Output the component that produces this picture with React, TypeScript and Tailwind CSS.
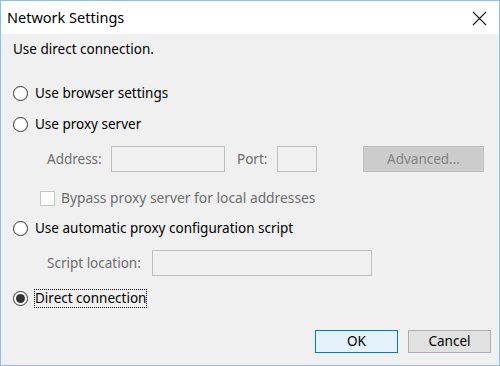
import React from "react";

const font = { fontFamily: '"Noto Sans", "Open Sans", sans-serif' };

function Radio({ checked }: { checked?: boolean }) {
  return (
    <span className="flex h-[15px] w-[15px] shrink-0 items-center justify-center rounded-full border border-[#333333] bg-white">
      {checked && <span className="h-[9px] w-[9px] rounded-full bg-[#333333]" />}
    </span>
  );
}

function RadioRow({
  label,
  checked,
  focused,
  className,
}: {
  label: string;
  checked?: boolean;
  focused?: boolean;
  className?: string;
}) {
  return (
    <div className={`flex h-[20px] items-center pl-[12px] ${className ?? ""}`}>
      <Radio checked={checked} />
      <span
        className={`ml-[6px] leading-[17px] text-black ${
          focused ? "border border-dotted border-black" : "px-[1px]"
        }`}
      >
        {label}
      </span>
    </div>
  );
}

function DisabledInput({ className }: { className: string }) {
  return <div className={`h-[26px] shrink-0 border border-[#bfbfbf] bg-[#f0f0f0] ${className}`} />;
}

export default function App() {
  return (
    <div
      className="flex h-[366px] w-[500px] flex-col border border-[#8fbfec] bg-[#f0f0f0] text-[13.5px] text-black"
      style={font}
    >
      <div className="flex h-[33px] shrink-0 items-center justify-between bg-white pl-[6px] pr-[12px]">
        <span className="text-[14.5px] text-black">Network Settings</span>
        <svg width="15" height="15" viewBox="0 0 15 15" className="mt-[1px]">
          <path d="M1 1 L14 14 M14 1 L1 14" stroke="#1a1a1a" strokeWidth="1.1" fill="none" />
        </svg>
      </div>

      <div className="flex flex-1 flex-col">
        <div className="mt-[5px] flex h-[20px] items-center pl-[12px]">Use direct connection.</div>

        <RadioRow label="Use browser settings" className="mt-[24px]" />
        <RadioRow label="Use proxy server" className="mt-[11px]" />

        <div className="mt-[12px] flex h-[26px] items-center text-[#6d6d6d]">
          <span className="ml-[46px] w-[64px]">Address:</span>
          <DisabledInput className="w-[114px]" />
          <span className="ml-[12px] w-[40px]">Port:</span>
          <DisabledInput className="w-[40px]" />
          <div className="ml-[46px] flex h-[26px] w-[121px] items-center justify-center border border-[#bfbfbf] bg-[#cccccc] text-[#838383]">
            Advanced...
          </div>
        </div>

        <div className="mt-[16px] flex h-[20px] items-center text-[#6d6d6d]">
          <span className="ml-[39px] h-[15px] w-[15px] border border-[#c5c5c5] bg-[#fcfcfc]" />
          <span className="ml-[6px] text-[13.8px]">Bypass proxy server for local addresses</span>
        </div>

        <RadioRow label="Use automatic proxy configuration script" className="mt-[10px]" />

        <div className="mt-[12px] flex h-[26px] items-center text-[#6d6d6d]">
          <span className="ml-[46px] w-[105px]">Script location:</span>
          <DisabledInput className="w-[220px]" />
        </div>

        <RadioRow label="Direct connection" checked focused className="mt-[12px]" />

        <div className="mt-[22px] flex justify-end gap-[10px] pr-[8px]">
          <button className="h-[23px] w-[83px] border border-[#0078d7] bg-[#e5f1fb] text-black">
            OK
          </button>
          <button className="h-[23px] w-[83px] border border-[#adadad] bg-[#e1e1e1] text-black">
            Cancel
          </button>
        </div>
      </div>
    </div>
  );
}
